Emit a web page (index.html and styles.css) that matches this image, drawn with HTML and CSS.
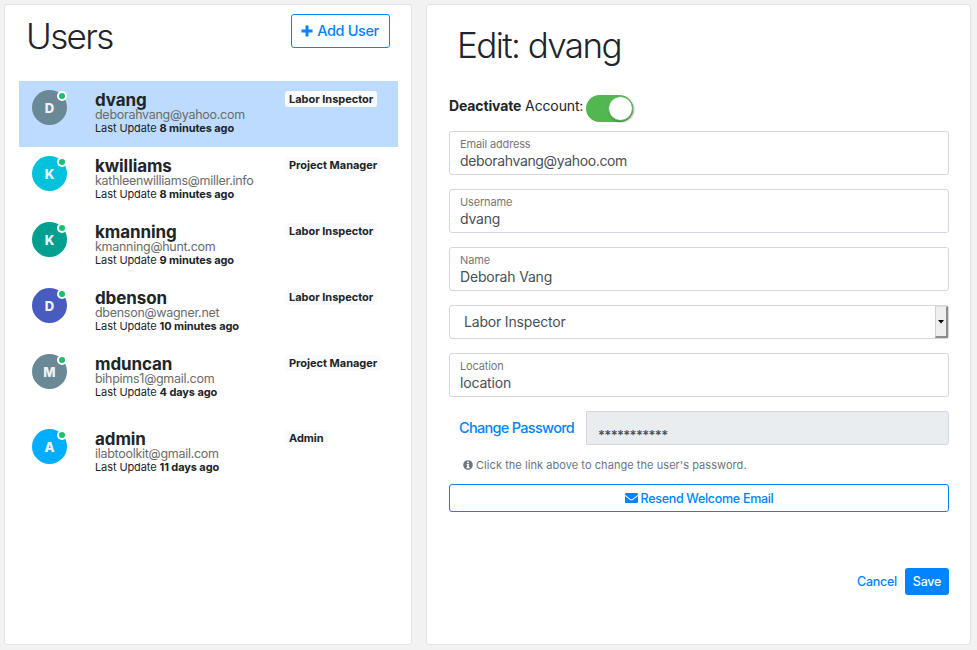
FILE: index.html
```html
<!DOCTYPE html>
<html lang="en">
<head>
<meta charset="utf-8">
<title>Users</title>
<link rel="stylesheet" href="styles.css">
</head>
<body>
<main class="layout">
  <section class="card users">
    <header class="users-head">
      <h1>Users</h1>
      <button class="btn-outline add"><svg width="12" height="12" viewBox="0 0 12 12"><path d="M4.5 .5h3v4h4v3h-4v4h-3v-4h-4v-3h4z"/></svg><span>Add User</span></button>
    </header>
    <ul class="list">
      <li class="row selected"><div class="avatar slate">D<i class="dot"></i></div><div class="info"><h2>dvang</h2><p class="mail">deborahvang@yahoo.com</p><p class="upd">Last Update <b>8 minutes ago</b></p></div><div class="role"><span class="badge">Labor Inspector</span></div></li>
      <li class="row"><div class="avatar cyan">K<i class="dot"></i></div><div class="info"><h2>kwilliams</h2><p class="mail">kathleenwilliams@miller.info</p><p class="upd">Last Update <b>8 minutes ago</b></p></div><div class="role"><span class="badge">Project Manager</span></div></li>
      <li class="row"><div class="avatar teal">K<i class="dot"></i></div><div class="info"><h2>kmanning</h2><p class="mail">kmanning@hunt.com</p><p class="upd">Last Update <b>9 minutes ago</b></p></div><div class="role"><span class="badge">Labor Inspector</span></div></li>
      <li class="row"><div class="avatar indigo">D<i class="dot"></i></div><div class="info"><h2>dbenson</h2><p class="mail">dbenson@wagner.net</p><p class="upd">Last Update <b>10 minutes ago</b></p></div><div class="role"><span class="badge">Labor Inspector</span></div></li>
      <li class="row"><div class="avatar slate">M<i class="dot"></i></div><div class="info"><h2>mduncan</h2><p class="mail">bihpims1@gmail.com</p><p class="upd">Last Update <b>4 days ago</b></p></div><div class="role"><span class="badge">Project Manager</span></div></li>
      <li class="row last"><div class="avatar sky">A<i class="dot"></i></div><div class="info"><h2>admin</h2><p class="mail">ilabtoolkit@gmail.com</p><p class="upd">Last Update <b>11 days ago</b></p></div><div class="role"><span class="badge">Admin</span></div></li>
    </ul>
  </section>

  <section class="card edit">
    <h1>Edit: dvang</h1>
    <div class="toggle-row"><span class="toggle-label"><b>Deactivate</b> Account:</span><span class="switch"><span class="knob"></span></span></div>
    <div class="field"><label>Email address</label><span class="value tight">deborahvang@yahoo.com</span></div>
    <div class="field"><label>Username</label><span class="value">dvang</span></div>
    <div class="field"><label>Name</label><span class="value">Deborah Vang</span></div>
    <div class="select"><span class="value">Labor Inspector</span><span class="arrow"><svg width="6" height="4" viewBox="0 0 6 4"><path d="M0 0h6L3 3.4z"/></svg></span></div>
    <div class="field"><label>Location</label><span class="value">location</span></div>
    <div class="password"><a>Change Password</a><span class="masked">***********</span></div>
    <p class="hint"><svg width="10" height="10" viewBox="0 0 10 10"><circle cx="5" cy="5" r="4.8" fill="#6c757d"/><path fill="#fff" d="M4.2 1.4h1.7v1.5H4.2zM3.6 3.8h2.3v3.3h.7v1.1H3.5V7.1h.7V4.9h-.6z"/></svg><span>Click the link above to change the user's password.</span></p>
    <button class="btn-outline resend"><svg width="13" height="10" viewBox="0 0 13 10"><path d="M1.2 0h10.6A1.2 1.2 0 0 1 13 1.2v.5L7.6 5.9q-1.1.8-2.2 0L0 1.7v-.5A1.2 1.2 0 0 1 1.2 0zM0 3l4.9 3.8q1.6 1.1 3.2 0L13 3v5.8a1.2 1.2 0 0 1-1.2 1.2H1.2A1.2 1.2 0 0 1 0 8.8z"/></svg><span>Resend Welcome Email</span></button>
    <div class="actions"><a>Cancel</a><button class="save">Save</button></div>
  </section>
</main>
</body>
</html>
```
FILE: styles.css
```css
* { box-sizing: border-box; }
body { margin: 0; background: #f2f2f2; color: #212529; font-family: Inter, "Liberation Sans", sans-serif; }
h1, h2, p, ul { margin: 0; padding: 0; }
b { font-weight: 700; }
button { font-family: inherit; margin: 0; padding: 0; }
.layout { display: flex; gap: 14px; width: 977px; height: 650px; padding: 4px 6px 5px 4px; }
.card { background: #fff; border: 1px solid #e2e2e2; border-radius: 3px; }
.users { width: 408px; padding: 9px 13px 0 14px; }
.edit { width: 545px; padding: 17px 21px 0 22px; display: flex; flex-direction: column; }
h1 { font-weight: 300; font-size: 35px; line-height: 46px; letter-spacing: -1.6px; }

.users-head { display: flex; justify-content: space-between; align-items: flex-start; height: 67px; padding: 0 8px 0 7px; }
.users-head h1 { margin-top: -1px; }
.btn-outline { display: flex; align-items: center; justify-content: center; background: #fff; border: 1px solid #0084ff; border-radius: 3px; color: #0084ff; white-space: nowrap; }
.btn-outline svg { fill: #0084ff; flex: none; }
.add { width: 99px; height: 34px; padding: 0 1px 1px 0; gap: 4px; font-size: 14.5px; font-weight: 450; letter-spacing: -.38px; }

.list { list-style: none; }
.row { display: flex; height: 66px; padding: 9px 0 0 13px; }
.selected { background: #bddbff; }
.last { margin-top: 9px; }
.avatar { position: relative; width: 35px; height: 35px; border-radius: 50%; color: #f0f3f5; font-size: 13px; font-weight: 800; line-height: 36px; text-align: center; }
.slate { background: #6a8896; }
.cyan { background: #00c2dd; }
.teal { background: #009f8f; }
.indigo { background: #485bbf; }
.sky { background: #00aeff; }
.dot { position: absolute; right: 2.5px; top: 2.5px; width: 6px; height: 6px; border-radius: 50%; background: #1ac06f; box-shadow: 0 0 0 2px #fff; }
.info { width: 190px; margin-left: 28px; padding-top: 1px; white-space: nowrap; }
h2 { font-size: 17px; line-height: 18px; font-weight: 700; letter-spacing: -.1px; }
.mail { font-size: 12.5px; line-height: 12px; color: #6b6b6b; letter-spacing: -.28px; }
.upd { font-size: 11px; line-height: 15px; letter-spacing: -.1px; }
.role { padding-top: 1px; white-space: nowrap; line-height: 16px; display: flex; align-items: flex-start; }
.badge { padding: 0 4px; background: #f9fafb; border-radius: 3px; font-size: 11px; line-height: 16px; font-weight: 700; letter-spacing: -.02px; }

.edit h1 { padding-left: 8px; height: 46px; }
.toggle-row { display: flex; align-items: flex-start; height: 63px; padding-top: 27px; }
.toggle-label { font-size: 14px; line-height: 22px; letter-spacing: -.13px; white-space: nowrap; }
.switch { display: flex; justify-content: flex-end; width: 47px; height: 27px; margin-left: 3px; padding: 1px 0; border-radius: 14px; background: #52b651; }
.knob { width: 25px; height: 25px; border: 1px solid #52b651; border-radius: 50%; background: #fff; box-shadow: 1px 1px 2px #0006; }
.field { height: 44px; margin-bottom: 14px; padding: 4px 10px 0; border: 1px solid #d3d7df; border-radius: 3px; white-space: nowrap; }
.field label { display: block; font-size: 11px; line-height: 16px; letter-spacing: -.15px; color: #777; }
.value { display: block; font-size: 14px; line-height: 18px; letter-spacing: -.18px; color: #495057; }
.tight { letter-spacing: -.35px; }
.select { display: flex; justify-content: space-between; align-items: center; height: 34px; margin-bottom: 14px; padding-left: 14px; border: 1px solid #d3d7df; border-radius: 3px; }
.arrow { display: flex; align-items: center; justify-content: center; width: 13px; height: 32px; border: solid; border-width: 1px 2px 2px 1px; border-color: #ddd #8e8e8e #8e8e8e #d0d0d0; background: #efefef; }
.password { display: flex; height: 34px; white-space: nowrap; }
.password a { width: 137px; padding-left: 10px; color: #0084ff; font-size: 14.5px; font-weight: 450; line-height: 34px; letter-spacing: -.7px; }
.masked { flex: 1; height: 34px; padding: 9px 11px 0; border: 1px solid #d3d7dd; border-radius: 0 3px 3px 0; background: #eaedf0; color: #495057; font-size: 13px; font-weight: 600; letter-spacing: -.7px; line-height: 28px; }
.hint { display: flex; align-items: center; gap: 3px; height: 39px; padding-left: 14px; color: #6c757d; font-size: 11px; letter-spacing: .06px; white-space: nowrap; }
.resend { width: 100%; height: 28px; gap: 3px; font-size: 12.5px; font-weight: 500; letter-spacing: -.3px; }
.actions { display: flex; justify-content: flex-end; align-items: center; gap: 8px; margin-top: 56px; color: #0084ff; font-size: 12.5px; font-weight: 450; letter-spacing: -.25px; }
.save { width: 44px; height: 27px; border: 0; border-radius: 3px; background: #0084ff; color: #fff; font-size: 12.5px; font-weight: 500; letter-spacing: -.2px; }
```
